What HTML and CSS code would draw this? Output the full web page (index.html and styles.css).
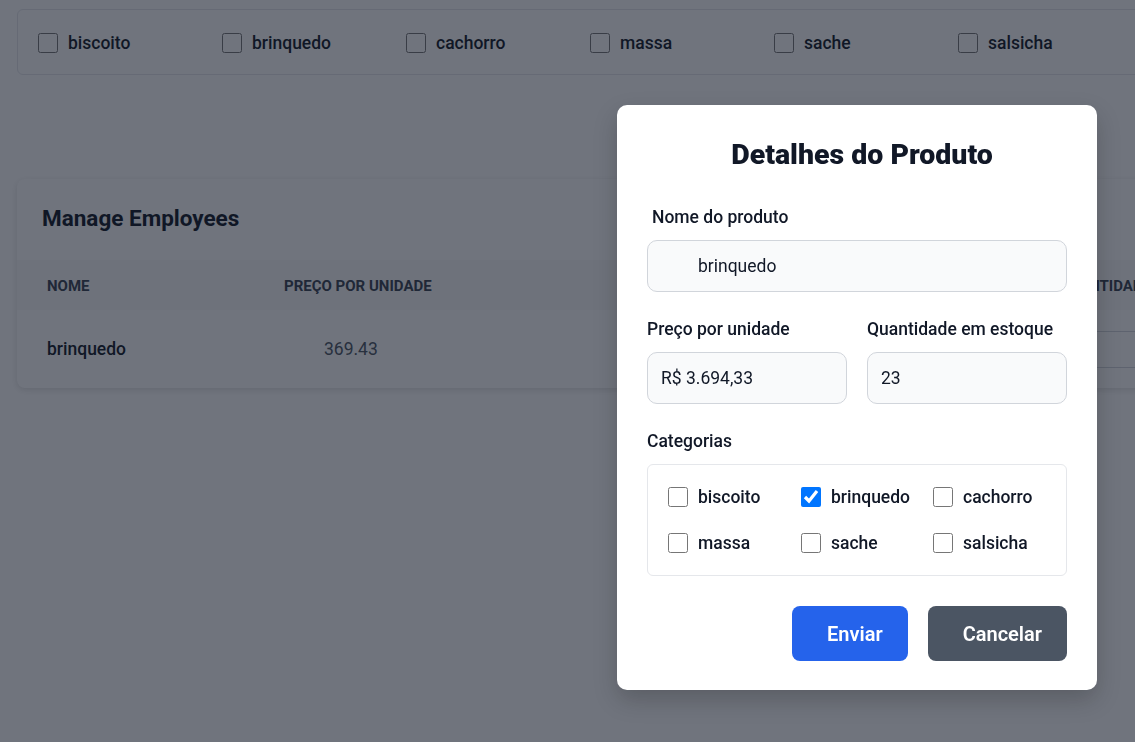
FILE: index.html
```html
<!DOCTYPE html>
<html lang="pt-BR">
<head>
<meta charset="utf-8">
<title>Produtos</title>
<link rel="stylesheet" href="styles.css">
</head>
<body>
<div class="page">
  <div class="filter-card">
    <label class="filter-item"><input type="checkbox" class="cb"><span>biscoito</span></label>
    <label class="filter-item"><input type="checkbox" class="cb"><span>brinquedo</span></label>
    <label class="filter-item"><input type="checkbox" class="cb"><span>cachorro</span></label>
    <label class="filter-item"><input type="checkbox" class="cb"><span>massa</span></label>
    <label class="filter-item"><input type="checkbox" class="cb"><span>sache</span></label>
    <label class="filter-item"><input type="checkbox" class="cb"><span>salsicha</span></label>
  </div>

  <div class="table-card">
    <h2 class="table-title">Manage Employees</h2>
    <div class="table">
      <div class="thead">
        <div class="th col-name">Nome</div>
        <div class="th col-price">Preço por unidade</div>
        <div class="th col-qty">Quantidade</div>
      </div>
      <div class="trow">
        <div class="td col-name name-cell">brinquedo</div>
        <div class="td col-price price-cell">369.43</div>
        <div class="td col-qty"><div class="qty-box"></div></div>
      </div>
    </div>
  </div>
</div>

<div class="overlay"></div>

<div class="modal">
  <h1 class="modal-title">Detalhes do Produto</h1>

  <div class="field">
    <div class="label label-name">Nome do produto</div>
    <div class="input input-name">brinquedo</div>
  </div>

  <div class="field-row">
    <div class="field">
      <div class="label">Preço por unidade</div>
      <div class="input">R$ 3.694,33</div>
    </div>
    <div class="field">
      <div class="label">Quantidade em estoque</div>
      <div class="input">23</div>
    </div>
  </div>

  <div class="field">
    <div class="label">Categorias</div>
    <div class="cat-box">
      <label class="cat-item"><input type="checkbox" class="cb"><span>biscoito</span></label>
      <label class="cat-item"><input type="checkbox" class="cb" checked><span>brinquedo</span></label>
      <label class="cat-item"><input type="checkbox" class="cb"><span>cachorro</span></label>
      <label class="cat-item"><input type="checkbox" class="cb"><span>massa</span></label>
      <label class="cat-item"><input type="checkbox" class="cb"><span>sache</span></label>
      <label class="cat-item"><input type="checkbox" class="cb"><span>salsicha</span></label>
    </div>
  </div>

  <div class="actions">
    <button class="btn btn-primary">Enviar</button>
    <button class="btn btn-secondary">Cancelar</button>
  </div>
</div>
</body>
</html>
```

FILE: styles.css
```css
* { box-sizing: border-box; }

html, body {
  margin: 0;
  padding: 0;
  height: 100%;
}

body {
  font-family: Roboto, "Liberation Sans", sans-serif;
  background: #ffffff;
  color: #111827;
  overflow: hidden;
}

.page {
  width: 100vw;
  height: 100vh;
  overflow: hidden;
  padding: 9px 0 0 17px;
}

/* top filter card */
.filter-card {
  width: 1400px;
  height: 66px;
  border: 1px solid #e5e7eb;
  border-radius: 6px;
  background: #ffffff;
  display: flex;
  align-items: center;
  padding: 0 0 0 20px;
}

.filter-item {
  width: 184px;
  flex: none;
  display: flex;
  align-items: center;
  gap: 10px;
  font-size: 17.5px;
  font-weight: 500;
  color: #111827;
  line-height: 24px;
  padding-top: 2px;
}

.cb {
  width: 20px;
  height: 20px;
  margin: 0;
  flex: none;
  accent-color: #0075ff;
}

/* table card */
.table-card {
  margin-top: 104px;
  width: 1400px;
  background: #ffffff;
  border-radius: 8px;
  box-shadow: 0 2px 6px rgba(0, 0, 0, 0.12);
  overflow: hidden;
}

.table-title {
  margin: 0;
  padding: 24px 25px 0;
  height: 81px;
  font-size: 22.5px;
  font-weight: 700;
  line-height: 30px;
  color: #111827;
}

.thead, .trow {
  display: grid;
  grid-template-columns: 237px 775px 1fr;
  padding-left: 30px;
}

.thead {
  height: 50px;
  align-items: center;
  background: #fafafa;
  padding-top: 2px;
}

.th {
  font-size: 15px;
  font-weight: 700;
  text-transform: uppercase;
  color: #374151;
}

.trow {
  height: 78px;
  align-items: center;
}

.name-cell {
  font-size: 17.5px;
  font-weight: 500;
  color: #111827;
}

.price-cell {
  font-size: 17.5px;
  color: #4b5563;
  padding-left: 40px;
}

.qty-box {
  width: 200px;
  height: 37px;
  border: 1px solid #d1d5db;
  border-radius: 6px;
}

/* overlay */
.overlay {
  position: fixed;
  inset: 0;
  background: rgba(17, 24, 39, 0.6);
}

/* modal */
.modal {
  position: fixed;
  left: 617px;
  top: 105px;
  width: 480px;
  background: #ffffff;
  border-radius: 10px;
  padding: 30px 30px 29px;
  box-shadow: 0 10px 25px rgba(0, 0, 0, 0.2);
}

.modal-title {
  margin: 0 0 30px;
  padding-left: 10px;
  text-align: center;
  font-size: 28.5px;
  font-weight: 900;
  line-height: 40px;
  color: #111827;
}

.field {
  display: flex;
  flex-direction: column;
  gap: 11px;
}

.label {
  font-size: 17.5px;
  font-weight: 500;
  line-height: 24px;
  color: #111827;
}

.label-name { padding-left: 5px; }

.input {
  height: 52px;
  border: 1px solid #d1d5db;
  border-radius: 10px;
  background: #f9fafb;
  display: flex;
  align-items: center;
  padding: 0 13px;
  font-size: 17.5px;
  color: #111827;
}

.input-name { padding-left: 50px; }

.field-row {
  display: grid;
  grid-template-columns: 1fr 1fr;
  gap: 20px;
  margin: 25px 0;
}

.cat-box {
  border: 1px solid #e5e7eb;
  border-radius: 6px;
  padding: 20px 20px;
  display: grid;
  grid-template-columns: 133px 132px 1fr;
  row-gap: 22px;
}

.cat-item {
  display: flex;
  align-items: center;
  gap: 10px;
  font-size: 17.5px;
  font-weight: 500;
  line-height: 24px;
  color: #111827;
}

.actions {
  margin-top: 30px;
  display: flex;
  justify-content: flex-end;
  gap: 20px;
}

.btn {
  height: 55px;
  border: none;
  border-radius: 8px;
  padding: 0 25px 0 35px;
  font-family: Roboto, "Liberation Sans", sans-serif;
  font-size: 20px;
  font-weight: 600;
  color: #ffffff;
}

.btn-primary { background: #2563eb; }
.btn-secondary { background: #4b5563; }
```
